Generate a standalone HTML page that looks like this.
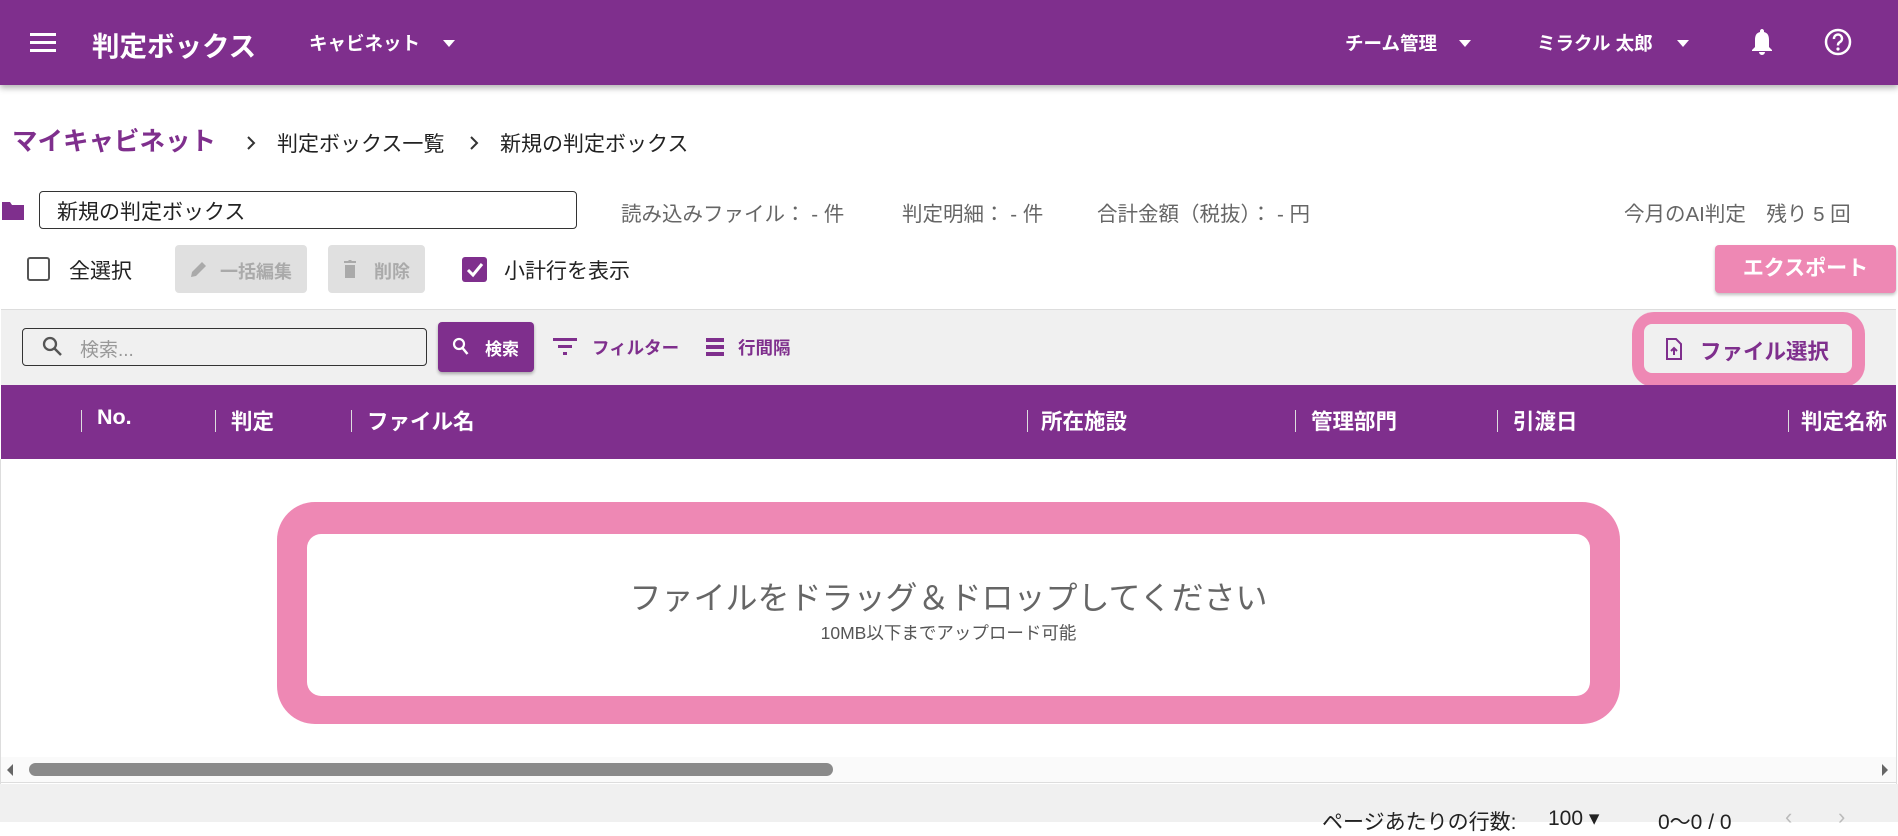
<!DOCTYPE html>
<html><head><meta charset="utf-8"><style>
*{box-sizing:border-box;margin:0;padding:0}
body{width:1898px;height:822px;overflow:hidden;background:#fff;font-family:"Liberation Sans","Noto Sans CJK JP",sans-serif;position:relative;color:#333}
.a{position:absolute;white-space:nowrap}
.hdr{left:0;top:0;width:1898px;height:85px;background:#7f2f8d;box-shadow:0 3px 6px rgba(0,0,0,.3);color:#fff}
.w{color:#fff;font-weight:bold}
.tri{width:0;height:0;border-left:6px solid transparent;border-right:6px solid transparent;border-top:7px solid #fff}
.g{color:#666;font-size:20.5px}
.th{color:#fff;font-weight:bold;font-size:21.5px;top:405px}
.dv{top:410px;width:1px;height:22px;background:#ddd}
</style></head><body>
<div class="a hdr">
 <svg class="a" style="left:30px;top:32px" width="28" height="22" viewBox="0 0 28 22"><rect y="1" width="26" height="3" fill="#fff"/><rect y="9" width="26" height="3" fill="#fff"/><rect y="17" width="26" height="3" fill="#fff"/></svg>
 <div class="a w" style="left:92px;top:24px;font-size:27.5px">判定ボックス</div>
 <div class="a w" style="left:309px;top:30px;font-size:18.5px">キャビネット</div>
 <div class="a tri" style="left:443px;top:40px"></div>
 <div class="a w" style="left:1345px;top:30px;font-size:18.5px">チーム管理</div>
 <div class="a tri" style="left:1459px;top:40px"></div>
 <div class="a w" style="left:1537px;top:30px;font-size:18.5px">ミラクル 太郎</div>
 <div class="a tri" style="left:1677px;top:40px"></div>
 <svg class="a" style="left:1750px;top:27px" width="24" height="30" viewBox="0 0 24 30"><path d="M12 2c-1 0-2 1-2 2v1C6 6 5 9 5 13v7l-3 3v1h20v-1l-3-3v-7c0-4-1-7-5-8V4c0-1-1-2-2-2z M9 25a3 3 0 0 0 6 0z" fill="#fff"/></svg>
 <svg class="a" style="left:1824px;top:28px" width="28" height="28" viewBox="0 0 28 28"><circle cx="14" cy="14" r="12" fill="none" stroke="#fff" stroke-width="2.5"/><path d="M10 11a4 4 0 1 1 6 3c-1.5 1-2 1.5-2 3.5" fill="none" stroke="#fff" stroke-width="2.5"/><circle cx="14" cy="21" r="1.6" fill="#fff"/></svg>
</div>
<div class="a" style="left:12px;top:121px;font-size:25.5px;font-weight:bold;color:#7f2f8d">マイキャビネット</div>
<svg class="a" style="left:246px;top:136px" width="10" height="14"><path d="M2 1l6 6-6 6" fill="none" stroke="#333" stroke-width="2"/></svg>
<div class="a" style="left:277px;top:128px;font-size:21px;color:#222">判定ボックス一覧</div>
<svg class="a" style="left:469px;top:136px" width="10" height="14"><path d="M2 1l6 6-6 6" fill="none" stroke="#333" stroke-width="2"/></svg>
<div class="a" style="left:500px;top:128px;font-size:21px;color:#222">新規の判定ボックス</div>
<svg class="a" style="left:2px;top:200px" width="23" height="20" viewBox="0 0 23 20"><path d="M0 2h8l2 3h12v15H0z" fill="#7f2f8d"/></svg>
<div class="a" style="left:39px;top:191px;width:538px;height:38px;border:1.5px solid #333;border-radius:4px"></div>
<div class="a" style="left:57px;top:196px;font-size:21px;color:#222">新規の判定ボックス</div>
<div class="a g" style="left:621px;top:197px">読み込みファイル： - 件</div>
<div class="a g" style="left:902px;top:197px">判定明細： - 件</div>
<div class="a g" style="left:1097px;top:197px">合計金額（税抜）： - 円</div>
<div class="a g" style="left:1624px;top:197px">今月のAI判定　残り 5 回</div>
<div class="a" style="left:27px;top:257px;width:23px;height:24px;border:2.5px solid #555;border-radius:3px"></div>
<div class="a" style="left:69px;top:255px;font-size:21px;color:#222">全選択</div>
<div class="a" style="left:175px;top:245px;width:132px;height:48px;background:#e0e0e0;border-radius:4px"></div>
<svg class="a" style="left:190px;top:260px" width="18" height="18" viewBox="0 0 18 18"><path d="M1 17l1-5L12 2l4 4L6 16z" fill="#aaa"/></svg>
<div class="a" style="left:220px;top:258px;font-size:18px;color:#aaa;font-weight:bold">一括編集</div>
<div class="a" style="left:328px;top:245px;width:97px;height:48px;background:#e0e0e0;border-radius:4px"></div>
<svg class="a" style="left:343px;top:259px" width="14" height="20" viewBox="0 0 14 20"><path d="M1 2h4l1-1h2l1 1h4v2H1z M2 6h10v13H2z" fill="#aaa"/></svg>
<div class="a" style="left:374px;top:258px;font-size:18px;color:#aaa;font-weight:bold">削除</div>
<div class="a" style="left:462px;top:257px;width:25px;height:25px;background:#7f2f8d;border-radius:3px"></div>
<svg class="a" style="left:462px;top:257px" width="25" height="25"><path d="M6 13l5 5 9-11" fill="none" stroke="#fff" stroke-width="3"/></svg>
<div class="a" style="left:504px;top:255px;font-size:21px;color:#222">小計行を表示</div>
<div class="a" style="left:1715px;top:245px;width:181px;height:48px;background:#ee88b4;border-radius:4px;box-shadow:0 2px 3px rgba(0,0,0,.25);color:#fff;font-weight:bold;font-size:21px;text-align:center;line-height:48px">エクスポート</div>
<div class="a" style="left:1px;top:309px;width:1895px;height:76px;background:#f0f0f0;border-top:1px solid #ddd"></div>
<div class="a" style="left:22px;top:328px;width:405px;height:38px;border:1.5px solid #333;border-radius:4px;background:#f0f0f0"></div>
<svg class="a" style="left:42px;top:336px" width="22" height="22" viewBox="0 0 22 22"><circle cx="8" cy="8" r="6" fill="none" stroke="#555" stroke-width="2.3"/><path d="M12 12l7 7" stroke="#555" stroke-width="2.5"/></svg>
<div class="a" style="left:80px;top:335px;font-size:19px;color:#999">検索...</div>
<div class="a" style="left:438px;top:322px;width:96px;height:50px;background:#7f2f8d;border-radius:4px;box-shadow:0 2px 3px rgba(0,0,0,.3)"></div>
<svg class="a" style="left:452px;top:337px" width="18" height="20" viewBox="0 0 18 20"><circle cx="7" cy="7" r="5" fill="none" stroke="#fff" stroke-width="2.2"/><path d="M10.5 11l5 6" stroke="#fff" stroke-width="2.5"/></svg>
<div class="a" style="left:485px;top:335px;font-size:17px;color:#fff;font-weight:bold">検索</div>
<svg class="a" style="left:553px;top:337px" width="26" height="20"><rect x="0" y="1" width="24" height="3" fill="#7f2f8d"/><rect x="5" y="8" width="14" height="3" fill="#7f2f8d"/><rect x="10" y="15" width="4" height="3" fill="#7f2f8d"/></svg>
<div class="a" style="left:592px;top:335px;font-size:17.5px;color:#7f2f8d;font-weight:bold">フィルター</div>
<svg class="a" style="left:706px;top:338px" width="20" height="18"><rect y="0" width="18" height="4" fill="#7f2f8d"/><rect y="7" width="18" height="4" fill="#7f2f8d"/><rect y="14" width="18" height="4" fill="#7f2f8d"/></svg>
<div class="a" style="left:738px;top:335px;font-size:17.5px;color:#7f2f8d;font-weight:bold">行間隔</div>
<div class="a" style="left:1632px;top:312px;width:233px;height:75px;background:#ee88b4;border-radius:22px"></div>
<div class="a" style="left:1644px;top:324px;width:208px;height:49px;background:#f0f0f0;border-radius:8px"></div>
<svg class="a" style="left:1665px;top:337px" width="18" height="24" viewBox="0 0 18 24"><path d="M2 2h9l5 5v15H2z" fill="none" stroke="#7f2f8d" stroke-width="2"/><path d="M9 18v-7M6 14l3-3 3 3" fill="none" stroke="#7f2f8d" stroke-width="2"/></svg>
<div class="a" style="left:1700px;top:335px;font-size:21.5px;color:#7f2f8d;font-weight:bold">ファイル選択</div>
<div class="a" style="left:1px;top:385px;width:1895px;height:74px;background:#7f2f8d"></div>
<div class="a dv" style="left:81px"></div><div class="a th" style="left:97px">No.</div>
<div class="a dv" style="left:215px"></div><div class="a th" style="left:231px">判定</div>
<div class="a dv" style="left:351px"></div><div class="a th" style="left:367px">ファイル名</div>
<div class="a dv" style="left:1027px"></div><div class="a th" style="left:1041px">所在施設</div>
<div class="a dv" style="left:1295px"></div><div class="a th" style="left:1311px">管理部門</div>
<div class="a dv" style="left:1497px"></div><div class="a th" style="left:1513px">引渡日</div>
<div class="a dv" style="left:1788px"></div><div class="a th" style="left:1801px">判定名称</div>
<div class="a" style="left:0;top:459px;width:1px;height:325px;background:#ddd"></div>
<div class="a" style="left:1896px;top:459px;width:1px;height:325px;background:#ddd"></div>
<div class="a" style="left:277px;top:502px;width:1343px;height:222px;background:#ee88b4;border-radius:38px"></div>
<div class="a" style="left:307px;top:534px;width:1283px;height:162px;background:#fff;border-radius:14px"></div>
<div class="a" style="left:307px;top:573px;width:1283px;text-align:center;font-size:32px;color:#666">ファイルをドラッグ＆ドロップしてください</div>
<div class="a" style="left:307px;top:620px;width:1283px;text-align:center;font-size:17.5px;color:#555">10MB以下までアップロード可能</div>
<div class="a" style="left:1px;top:757px;width:1895px;height:26px;background:#fafafa;border-bottom:1px solid #ddd"></div>
<div class="a" style="left:29px;top:763px;width:804px;height:13px;background:#8a8a8a;border-radius:7px"></div>
<svg class="a" style="left:5px;top:763px" width="10" height="14"><path d="M8 1L2 7l6 6z" fill="#666"/></svg>
<svg class="a" style="left:1880px;top:763px" width="10" height="14"><path d="M2 1l6 6-6 6z" fill="#666"/></svg>
<div class="a" style="left:0;top:784px;width:1898px;height:38px;background:#f0f0f0"></div>
<div class="a" style="left:1322px;top:806px;font-size:21px;color:#222">ページあたりの行数:</div>
<div class="a" style="left:1548px;top:806px;font-size:21px;color:#222">100 ▾</div>
<div class="a" style="left:1658px;top:806px;font-size:21px;color:#222">0〜0 / 0</div>
<div class="a" style="left:1785px;top:804px;font-size:22px;color:#bbb">‹</div>
<div class="a" style="left:1838px;top:804px;font-size:22px;color:#bbb">›</div>
</body></html>
